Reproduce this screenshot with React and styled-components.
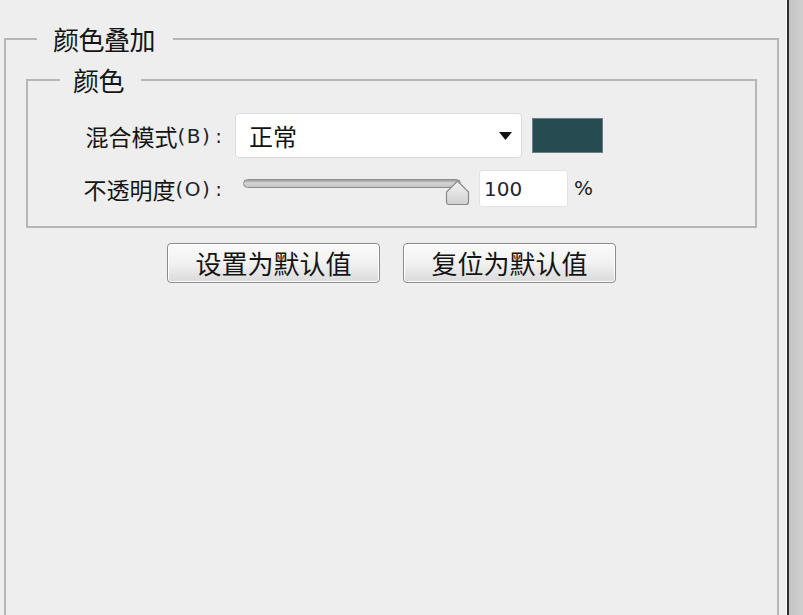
import React from "react";
import styled, { createGlobalStyle } from "styled-components";

const GlobalStyle = createGlobalStyle`
  html, body {
    margin: 0;
    padding: 0;
    background: #eeeeee;
    overflow: hidden;
  }
  body {
    font-family: "Noto Sans CJK SC", "Noto Sans", sans-serif;
    color: #151515;
  }
`;

const Window = styled.div`
  display: flex;
  width: 803px;
  height: 615px;
  overflow: hidden;
  background: #eeeeee;
`;

const Main = styled.div`
  flex: 0 0 787px;
  box-sizing: border-box;
  padding-left: 4px;
  border-right: 1px solid #fafafa;
  overflow: hidden;
`;

const Edge = styled.div`
  flex: 1;
  border-left: 2px solid #2e2e2e;
  background: linear-gradient(90deg, #c4c4c4, #cfcfcf);
`;

const Group = styled.fieldset`
  box-sizing: border-box;
  margin: ${(p) => p.$margin};
  padding: 0;
  min-width: 0;
  border: 2px solid #b6b6b6;
  border-radius: 0;
  width: ${(p) => p.$width || "auto"};
  height: ${(p) => p.$height || "auto"};
`;

const Legend = styled.legend`
  margin-left: ${(p) => p.$offset}px;
  padding: ${(p) => p.$pad};
  font-size: 26px;
  line-height: 30px;
  color: #141414;
  letter-spacing: -0.5px;
`;

const OuterBody = styled.div`
  padding: 0 20px;
`;

const Rows = styled.div`
  display: grid;
  grid-template-columns: 194px auto;
  column-gap: 13px;
  row-gap: 12px;
  align-items: center;
  padding: 18px 0 19px 0;
`;

const Label = styled.div`
  display: flex;
  justify-content: flex-end;
  align-items: center;
  font-size: 23px;
  line-height: 30px;
  white-space: nowrap;
  color: #151515;
`;

const Key = styled.span`
  font-family: "DejaVu Sans", "Liberation Sans", sans-serif;
  font-size: 20px;
  letter-spacing: 1.5px;
  color: #1d2430;
`;

const Colon = styled.span`
  margin-left: 4px;
  font-family: "DejaVu Sans", "Liberation Sans", sans-serif;
  font-size: 20px;
  color: #1d2430;
`;

const Controls = styled.div`
  display: flex;
  align-items: center;
  height: ${(p) => p.$h}px;
`;

const Select = styled.div`
  box-sizing: border-box;
  width: 287px;
  height: 45px;
  display: flex;
  align-items: center;
  justify-content: space-between;
  padding: 0 9px 0 13px;
  background: #ffffff;
  border: 1px solid #dcdcdc;
  border-radius: 4px;
  font-size: 24px;
  color: #111;
`;

const Swatch = styled.div`
  box-sizing: border-box;
  width: 71px;
  height: 35px;
  margin-left: 10px;
  background: #264b50;
  border: 1px solid #6a7f82;
`;

const SliderBox = styled.div`
  position: relative;
  box-sizing: border-box;
  width: 235px;
  height: 37px;
  padding: 9px 9px 0 8px;
`;

const Track = styled.div`
  height: 9px;
  border-radius: 5px;
  border: 1px solid #8e8e8e;
  box-sizing: border-box;
  background: linear-gradient(180deg, #9a9a9a 0%, #d6d6d6 45%, #c2c2c2 100%);
`;

const Thumb = styled.svg`
  position: absolute;
  left: 210px;
  top: 10px;
`;

const NumberInput = styled.input`
  box-sizing: border-box;
  width: 89px;
  height: 37px;
  margin-left: 9px;
  padding: 0 0 0 4px;
  border: 1px solid #e2e2e2;
  border-radius: 3px;
  background: #ffffff;
  font-family: "DejaVu Sans", "Liberation Sans", sans-serif;
  font-size: 20px;
  color: #242433;
  outline: none;
`;

const Unit = styled.span`
  margin-left: 6px;
  margin-top: -2px;
  font-family: "DejaVu Sans", "Liberation Sans", sans-serif;
  font-size: 20px;
  color: #222;
`;

const ButtonRow = styled.div`
  display: flex;
  justify-content: center;
  gap: 23px;
  margin-top: 15px;
`;

const Button = styled.button`
  box-sizing: border-box;
  width: 213px;
  height: 40px;
  padding: 0;
  border: 1px solid #8c8c8c;
  border-radius: 4px;
  background: linear-gradient(180deg, #fbfbfb 0%, #f1f1f1 50%, #dadada 100%);
  box-shadow: inset 0 0 0 1px #ffffff;
  font-family: "Noto Sans CJK SC", "Noto Sans", sans-serif;
  font-size: 26px;
  line-height: 38px;
  color: #141414;
`;

export default function App() {
  return (
    <>
      <GlobalStyle />
      <Window>
        <Main>
          <Group $margin="24px 0 0 0" $width="775px" $height="620px">
            <Legend $offset={31} $pad="0 18px 0 16px">颜色叠加</Legend>
            <OuterBody>
              <Group $margin="11px 0 0 0">
                <Legend $offset={32} $pad="0 17px 0 13px">颜色</Legend>
                <Rows>
                  <Label>
                    混合模式<Key>(B)</Key>
                    <Colon>:</Colon>
                  </Label>
                  <Controls $h={45}>
                    <Select>
                      <span>正常</span>
                      <svg width="13" height="8" viewBox="0 0 13 8">
                        <path d="M0 0 H13 L6.5 8 Z" fill="#111" />
                      </svg>
                    </Select>
                    <Swatch />
                  </Controls>
                  <Label>
                    不透明度<Key>(O)</Key>
                    <Colon>:</Colon>
                  </Label>
                  <Controls $h={37}>
                    <SliderBox>
                      <Track />
                      <Thumb width="25" height="26" viewBox="0 0 25 26">
                        <defs>
                          <linearGradient id="thumbFill" x1="0" y1="0" x2="0" y2="1">
                            <stop offset="0" stopColor="#f4f4f4" />
                            <stop offset="1" stopColor="#d0d0d0" />
                          </linearGradient>
                        </defs>
                        <path
                          d="M12.5 1 L23.5 12 V22 Q23.5 24.5 21 24.5 H4 Q1.5 24.5 1.5 22 V12 Z"
                          fill="url(#thumbFill)"
                          stroke="#8a8a8a"
                          strokeWidth="1.2"
                        />
                      </Thumb>
                    </SliderBox>
                    <NumberInput defaultValue="100" readOnly />
                    <Unit>%</Unit>
                  </Controls>
                </Rows>
              </Group>
              <ButtonRow>
                <Button>设置为默认值</Button>
                <Button>复位为默认值</Button>
              </ButtonRow>
            </OuterBody>
          </Group>
        </Main>
        <Edge />
      </Window>
    </>
  );
}
